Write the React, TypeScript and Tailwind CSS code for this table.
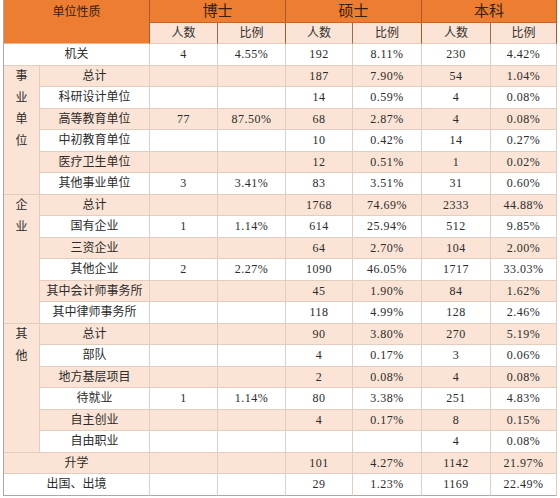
const rows: { label: string; v: string[] }[][] = [
  [
    { label: '总计', v: ['', '', '187', '7.90%', '54', '1.04%'] },
    { label: '科研设计单位', v: ['', '', '14', '0.59%', '4', '0.08%'] },
    { label: '高等教育单位', v: ['77', '87.50%', '68', '2.87%', '4', '0.08%'] },
    { label: '中初教育单位', v: ['', '', '10', '0.42%', '14', '0.27%'] },
    { label: '医疗卫生单位', v: ['', '', '12', '0.51%', '1', '0.02%'] },
    { label: '其他事业单位', v: ['3', '3.41%', '83', '3.51%', '31', '0.60%'] },
  ],
  [
    { label: '总计', v: ['', '', '1768', '74.69%', '2333', '44.88%'] },
    { label: '国有企业', v: ['1', '1.14%', '614', '25.94%', '512', '9.85%'] },
    { label: '三资企业', v: ['', '', '64', '2.70%', '104', '2.00%'] },
    { label: '其他企业', v: ['2', '2.27%', '1090', '46.05%', '1717', '33.03%'] },
    { label: '其中会计师事务所', v: ['', '', '45', '1.90%', '84', '1.62%'] },
    { label: '其中律师事务所', v: ['', '', '118', '4.99%', '128', '2.46%'] },
  ],
  [
    { label: '总计', v: ['', '', '90', '3.80%', '270', '5.19%'] },
    { label: '部队', v: ['', '', '4', '0.17%', '3', '0.06%'] },
    { label: '地方基层项目', v: ['', '', '2', '0.08%', '4', '0.08%'] },
    { label: '待就业', v: ['1', '1.14%', '80', '3.38%', '251', '4.83%'] },
    { label: '自主创业', v: ['', '', '4', '0.17%', '8', '0.15%'] },
    { label: '自由职业', v: ['', '', '', '', '4', '0.08%'] },
  ],
];

const groups = [['事', '业', '单', '位'], ['企', '业'], ['其', '他']];

const cell = 'border-r border-b border-[#e3cdbf] text-center align-middle p-0';

function Values({ v }: { v: string[] }) {
  return (
    <>
      {v.map((x, i) => (
        <td key={i} className={cell + ' tracking-[0.5px]'}>
          {x}
        </td>
      ))}
    </>
  );
}

export default function App() {
  let idx = 0;
  const bg = () => (idx++ % 2 === 0 ? 'bg-white' : 'bg-[#fbe4d5]');

  return (
    <div className="bg-white w-[560px] h-[498px]">
      <div className="ml-[3px] w-[554px] border-l border-[#a8a8a8]">
        <table
          className="table-fixed border-separate border-spacing-0 w-[553px] text-[12px] leading-none text-[#2b2b2b]"
          style={{ fontFamily: '"Liberation Serif", "Noto Sans CJK SC", serif' }}
        >
          <colgroup>
            <col className="w-[36px]" />
            <col className="w-[110px]" />
            <col className="w-[68px]" />
            <col className="w-[68px]" />
            <col className="w-[67px]" />
            <col className="w-[69px]" />
            <col className="w-[69px]" />
            <col className="w-[66px]" />
          </colgroup>
          <thead>
            <tr className="h-[23px]">
              <th
                colSpan={2}
                rowSpan={2}
                className="bg-[#ed7d31] border-r border-b border-r-[#a9592a] border-b-[#f1b58c] align-top pt-[6px] font-normal text-[#3a1e0c]"
              >
                单位性质
              </th>
              {['博士', '硕士', '本科'].map((t) => (
                <th
                  key={t}
                  colSpan={2}
                  className="bg-[#ed7d31] border-r border-b border-r-[#a9592a] border-b-[#c8632a] font-normal text-[15px] text-[#3a1e0c] align-middle"
                >
                  {t}
                </th>
              ))}
            </tr>
            <tr className="h-[21px]">
              {[0, 1, 2].map((g) => (
                <>
                  <th key={'a' + g} className="bg-[#fbe4d5] border-r border-b border-r-[#9c6a4e] border-b-[#e3cdbf] font-normal text-[#333]">
                    人数
                  </th>
                  <th key={'b' + g} className="bg-[#fbe4d5] border-r border-b border-r-[#a9592a] border-b-[#e3cdbf] font-normal text-[#333]">
                    比例
                  </th>
                </>
              ))}
            </tr>
          </thead>
          <tbody>
            <tr className={'h-[21.5px] ' + bg()}>
              <td colSpan={2} className={cell}>机关</td>
              <Values v={['4', '4.55%', '192', '8.11%', '230', '4.42%']} />
            </tr>
            {rows.map((grp, gi) =>
              grp.map((r, ri) => (
                <tr key={gi + '-' + ri} className={'h-[21.5px] ' + bg()}>
                  {ri === 0 && (
                    <td rowSpan={grp.length} className="bg-[#fbe4d5] border-r border-b border-[#e3cdbf] align-top p-0">
                      <div className="flex flex-col items-center">
                        {groups[gi].map((c, ci) => (
                          <div key={ci} className="h-[21.5px] flex items-center">
                            {c}
                          </div>
                        ))}
                      </div>
                    </td>
                  )}
                  <td className={cell}>{r.label}</td>
                  <Values v={r.v} />
                </tr>
              ))
            )}
            <tr className={'h-[21.5px] ' + bg()}>
              <td colSpan={2} className={cell}>升学</td>
              <Values v={['', '', '101', '4.27%', '1142', '21.97%']} />
            </tr>
            <tr className={'h-[21.5px] ' + bg()}>
              <td colSpan={2} className="border-r border-b border-r-[#e3cdbf] border-b-[#a8a8a8] text-center p-0">
                出国、出境
              </td>
              {['', '', '29', '1.23%', '1169', '22.49%'].map((x, i) => (
                <td key={i} className="border-r border-b border-r-[#e3cdbf] border-b-[#a8a8a8] text-center p-0 tracking-[0.5px]">
                  {x}
                </td>
              ))}
            </tr>
          </tbody>
        </table>
      </div>
    </div>
  );
}
